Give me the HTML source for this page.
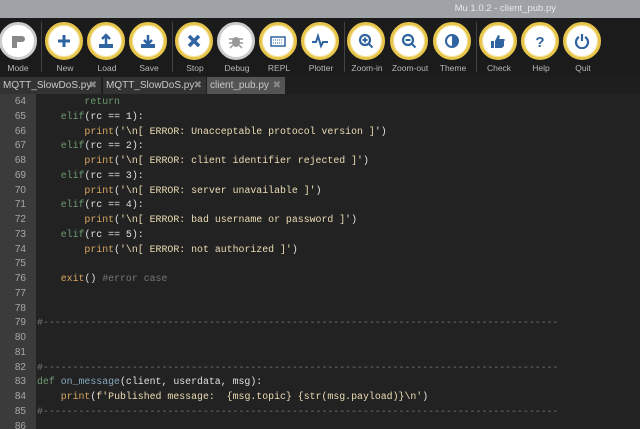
<!DOCTYPE html><html><head><style>
html,body{margin:0;width:640px;height:429px;overflow:hidden}
body{background:#1e1e1e;font-family:"Liberation Sans",sans-serif;position:relative}
.title{position:absolute;left:0;top:0;width:640px;height:18px;background:#9fa3a8;color:#e6e8ea;font-size:9.5px;text-align:right;box-sizing:border-box;padding:3px 84px 0 0}
.tb{position:absolute;top:18px;left:0;width:640px;height:58px;background:#1b1b1b}
.b{position:absolute;top:4px;width:38px;height:38px;border-radius:50%;background:#fff;border:3px solid #e6c54a;box-sizing:border-box;box-shadow:0 0 0 1px #f4e39a inset}
.b svg{position:absolute;left:8px;top:8px;width:16px;height:16px}
.l{position:absolute;top:45px;width:50px;margin-left:-25px;text-align:center;color:#b8b8b8;font-size:8.5px}
.sep{position:absolute;top:4px;width:1px;height:50px;background:#444}
.tab{position:absolute;top:77px;height:17px;background:#333;color:#c8c8c8;font-size:10px;line-height:17px;padding-left:3px;box-sizing:border-box}
.tab i{position:absolute;right:4px;font-style:normal;color:#888;font-size:10px}
.ed{position:absolute;top:94px;left:0;width:640px;height:335px;background:#222;overflow:hidden}
.gut{position:absolute;left:0;top:0;width:36px;height:335px;background:#3b3b3b}
.code{position:absolute;left:0;top:1px;font-family:"Liberation Mono",monospace;font-size:9.9px;line-height:14.75px;white-space:pre;color:#e0e0e0}
.n{display:inline-block;width:26px;text-align:right;color:#a8a8a8;margin-right:11px;font-family:"Liberation Sans",sans-serif;font-size:10px}
.k{color:#6e9a72}.p{color:#d6a662}.s{color:#ecdcb4}.c{color:#777}.f{color:#86a8c0}
</style></head><body>
<div class="title">Mu 1.0.2 - client_pub.py</div>
<div class="tb">
<div class="b" style="left:-1px;border-color:#ccc;box-shadow:none"><svg viewBox="0 0 16 16"><path d="M2 3h10a3 3 0 0 1 0 6H7v6H2z" fill="#888"/></svg></div><div class="l" style="left:18px">Mode</div>
<div class="sep" style="left:41px"></div>
<div class="b" style="left:45px"><svg viewBox="0 0 16 16"><path d="M8 2v12M2 8h12" stroke="#2f64a0" stroke-width="3"/></svg></div><div class="l" style="left:65px">New</div>
<div class="b" style="left:87px"><svg viewBox="0 0 16 16"><path d="M8 11V3M4 6l4-4 4 4" stroke="#2f64a0" stroke-width="2.5" fill="none"/><path d="M1 11h14v4H1z" fill="#2f64a0"/></svg></div><div class="l" style="left:107px">Load</div>
<div class="b" style="left:129px"><svg viewBox="0 0 16 16"><path d="M8 2v8M4 7l4 4 4-4" stroke="#2f64a0" stroke-width="2.5" fill="none"/><path d="M1 11h14v4H1z" fill="#2f64a0"/></svg></div><div class="l" style="left:149px">Save</div>
<div class="sep" style="left:172px"></div>
<div class="b" style="left:175px"><svg viewBox="0 0 16 16"><path d="M3 3l10 10M13 3L3 13" stroke="#2f64a0" stroke-width="3.5"/></svg></div><div class="l" style="left:195px">Stop</div>
<div class="b" style="left:217px;border-color:#ccc;box-shadow:none"><svg viewBox="0 0 16 16"><ellipse cx="8" cy="9" rx="4" ry="5" fill="#999"/><path d="M1 6h14M1 10h14M2 15l3-3M14 15l-3-3" stroke="#999" stroke-width="1.5"/></svg></div><div class="l" style="left:237px">Debug</div>
<div class="b" style="left:259px"><svg viewBox="0 0 16 16"><rect x="1" y="4" width="14" height="9" fill="none" stroke="#2f64a0" stroke-width="1.5"/><path d="M3 7h10M3 10h10" stroke="#2f64a0" stroke-dasharray="1 1"/></svg></div><div class="l" style="left:279px">REPL</div>
<div class="b" style="left:301px"><svg viewBox="0 0 16 16"><path d="M0 9h4l2-6 3 10 2-4h5" stroke="#2f64a0" stroke-width="2" fill="none"/></svg></div><div class="l" style="left:321px">Plotter</div>
<div class="sep" style="left:344px"></div>
<div class="b" style="left:347px"><svg viewBox="0 0 16 16"><circle cx="7" cy="7" r="5" stroke="#2f64a0" stroke-width="2.2" fill="none"/><path d="M10.5 10.5l4 4M7 4.5v5M4.5 7h5" stroke="#2f64a0" stroke-width="2"/></svg></div><div class="l" style="left:367px">Zoom-in</div>
<div class="b" style="left:390px"><svg viewBox="0 0 16 16"><circle cx="7" cy="7" r="5" stroke="#2f64a0" stroke-width="2.2" fill="none"/><path d="M10.5 10.5l4 4M4.5 7h5" stroke="#2f64a0" stroke-width="2"/></svg></div><div class="l" style="left:410px">Zoom-out</div>
<div class="b" style="left:433px"><svg viewBox="0 0 16 16"><circle cx="8" cy="8" r="6" stroke="#2f64a0" stroke-width="2" fill="none"/><path d="M8 2a6 6 0 0 1 0 12z" fill="#2f64a0"/></svg></div><div class="l" style="left:453px">Theme</div>
<div class="sep" style="left:476px"></div>
<div class="b" style="left:479px"><svg viewBox="0 0 16 16"><path d="M1 8h3v7H1zM5 8l3-6c2 0 2 2 1 4h5c1 0 1 2 0 2v5l-2 2H5z" fill="#2f64a0"/></svg></div><div class="l" style="left:499px">Check</div>
<div class="b" style="left:521px"><svg viewBox="0 0 16 16"><text x="8" y="14" font-size="15" font-weight="bold" text-anchor="middle" fill="#2f64a0" font-family="Liberation Sans">?</text></svg></div><div class="l" style="left:541px">Help</div>
<div class="b" style="left:563px"><svg viewBox="0 0 16 16"><path d="M5 4a6 6 0 1 0 6 0M8 1v7" stroke="#2f64a0" stroke-width="2.2" fill="none"/></svg></div><div class="l" style="left:583px">Quit</div>
</div>
<div class="tab" style="left:0;width:101px">MQTT_SlowDoS.py<i>✖</i></div>
<div class="tab" style="left:103px;width:103px">MQTT_SlowDoS.py<i>✖</i></div>
<div class="tab" style="left:207px;width:78px;background:#545454">client_pub.py<i>✖</i></div>
<div class="ed"><div class="gut"></div>
<div class="code"><span class="n">64</span>        <span class="k">return</span>
<span class="n">65</span>    <span class="k">elif</span>(rc == 1):
<span class="n">66</span>        <span class="p">print</span>(<span class="s">'\n[ ERROR: Unacceptable protocol version ]'</span>)
<span class="n">67</span>    <span class="k">elif</span>(rc == 2):
<span class="n">68</span>        <span class="p">print</span>(<span class="s">'\n[ ERROR: client identifier rejected ]'</span>)
<span class="n">69</span>    <span class="k">elif</span>(rc == 3):
<span class="n">70</span>        <span class="p">print</span>(<span class="s">'\n[ ERROR: server unavailable ]'</span>)
<span class="n">71</span>    <span class="k">elif</span>(rc == 4):
<span class="n">72</span>        <span class="p">print</span>(<span class="s">'\n[ ERROR: bad username or password ]'</span>)
<span class="n">73</span>    <span class="k">elif</span>(rc == 5):
<span class="n">74</span>        <span class="p">print</span>(<span class="s">'\n[ ERROR: not authorized ]'</span>)
<span class="n">75</span>
<span class="n">76</span>    <span class="p">exit</span>() <span class="c">#error case</span>
<span class="n">77</span>
<span class="n">78</span>
<span class="n">79</span><span class="c">#---------------------------------------------------------------------------------------</span>
<span class="n">80</span>
<span class="n">81</span>
<span class="n">82</span><span class="c">#---------------------------------------------------------------------------------------</span>
<span class="n">83</span><span class="k">def</span> <span class="f">on_message</span>(client, userdata, msg):
<span class="n">84</span>    <span class="p">print</span>(<span class="s">f'Published message:  {msg.topic} {str(msg.payload)}\n'</span>)
<span class="n">85</span><span class="c">#---------------------------------------------------------------------------------------</span>
<span class="n">86</span></div></div>
</body></html>
